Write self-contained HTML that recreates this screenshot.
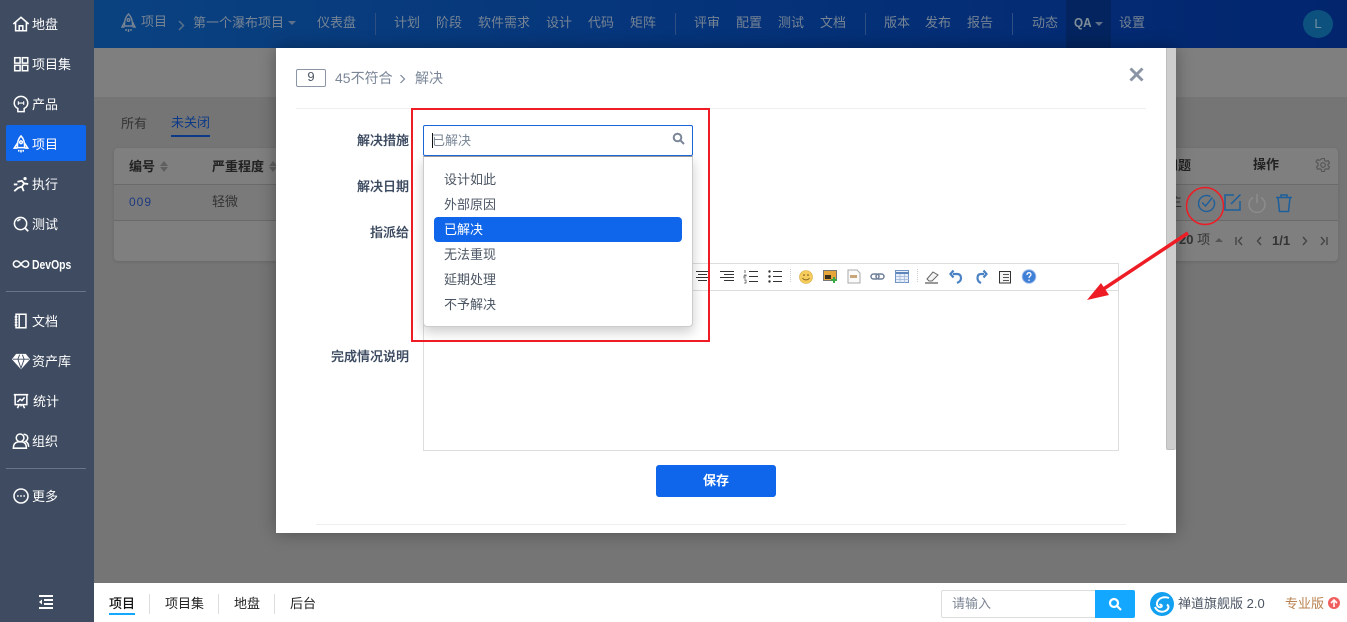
<!DOCTYPE html>
<html lang="zh"><head><meta charset="utf-8"><title>解决</title>
<style>
*{box-sizing:border-box}
html,body{margin:0;padding:0;width:1347px;height:622px;overflow:hidden;background:#757575;font-family:"Liberation Sans","Noto Sans CJK SC",sans-serif;font-size:13px}
.a{position:absolute}
.t{position:absolute;white-space:nowrap;line-height:20px;margin-top:1px}
.side{position:absolute;left:0;top:0;width:94px;height:622px;background:#3e4b60}
.side .t{left:32px;color:#fff;font-size:13px}
.side svg{position:absolute;left:12px;width:18px;height:18px;fill:none;stroke:#fff;stroke-width:1.700}
.nav{position:absolute;left:94px;top:0;width:1253px;height:48px;background:linear-gradient(90deg,#0a4280,#05337a 50%,#02256e)}
.top{position:absolute;white-space:nowrap;line-height:20px;top:13px;color:#768494;font-size:13px}
.sp{position:absolute;top:13px;width:1px;height:22px;background:#2f4f80}
.opt{position:absolute;left:20px;color:#4b5563;line-height:20px;white-space:nowrap;margin-top:1px}
.lab{position:absolute;right:938px;color:#3c4a60;line-height:20px;white-space:nowrap;font-weight:500;text-shadow:0 0 .4px #3c4a60;margin-top:1px}
.foot{position:absolute;top:594px;line-height:20px;color:#222;white-space:nowrap}
</style></head><body>

<div class="a" style="left:94px;top:48px;width:1253px;height:49px;background:#7f7f7f"></div>
<div class="t" style="left:121px;top:113px;color:#333">所有</div>
<div class="t" style="left:171px;top:112px;color:#0d3a88">未关闭</div>
<div class="a" style="left:171px;top:135px;width:39px;height:2px;background:#0d3a88"></div>
<div class="a" style="left:114px;top:148px;width:1224px;height:113px;background:#7f7f7f;border-radius:4px;box-shadow:0 1px 3px rgba(0,0,0,.12)"></div>
<div class="a" style="left:114px;top:184px;width:1224px;height:1px;background:#6a6a6a"></div>
<div class="a" style="left:114px;top:185px;width:1224px;height:35px;background:#7a7a7a"></div>
<div class="a" style="left:114px;top:220px;width:1224px;height:1px;background:#6a6a6a"></div>
<div class="t" style="left:129px;top:156px;color:#222;font-weight:700">编号</div>
<div class="a" style="left:160px;top:161px;border:4px solid transparent;border-bottom:5px solid #5f5f5f;border-top:0"></div>
<div class="a" style="left:160px;top:167px;border:4px solid transparent;border-top:5px solid #5f5f5f;border-bottom:0"></div>
<div class="t" style="left:212px;top:156px;color:#222;font-weight:700">严重程度</div>
<div class="a" style="left:269px;top:161px;border:4px solid transparent;border-bottom:5px solid #5f5f5f;border-top:0"></div>
<div class="a" style="left:269px;top:167px;border:4px solid transparent;border-top:5px solid #5f5f5f;border-bottom:0"></div>
<div class="t" style="left:129px;top:191px;color:#1d3a80;font-size:12px;letter-spacing:1px">009</div>
<div class="t" style="left:212px;top:191px;color:#333">轻微</div>
<div class="t" style="left:1176px;top:155px;width:15px;overflow:hidden;color:#222;direction:rtl;font-weight:700">问题</div>
<div class="t" style="left:1253px;top:154px;color:#222;font-weight:700">操作</div>
<svg class="a" style="left:1315px;top:157px" width="16" height="16" viewBox="0 0 16 16" fill="none" stroke="#555" stroke-width="1.100"><path d="M6.700 1.500h2.600l.4 2 1.500.8 2-.6 1.300 2.200-1.500 1.400v1.400l1.500 1.400-1.300 2.200-2-.6-1.500.8-.4 2H6.700l-.4-2-1.500-.8-2 .6-1.300-2.200 1.500-1.400V6.300L1 4.900l1.300-2.200 2 .6 1.500-.8z"/><circle cx="8" cy="8" r="2.300"/></svg>
<div class="t" style="left:1176px;top:191px;color:#333;width:6px;overflow:hidden;direction:rtl">主</div>
<svg class="a" style="left:1196px;top:193px" width="20" height="20" viewBox="0 0 20 20" fill="none" stroke="#1d5f9c" stroke-width="1.400"><path d="M17.500 6.500A8 8 0 1 1 14.500 3.500"/><path d="M6 9.500l3.500 3.500L16.500 4.500"/></svg>
<svg class="a" style="left:1223px;top:193px" width="19" height="19" viewBox="0 0 19 19" fill="none" stroke="#1d5f9c" stroke-width="1.500"><path d="M11 2H2v15h15V8"/><path d="M8 11L17.500 1.500"/></svg>
<svg class="a" style="left:1247px;top:193px" width="20" height="20" viewBox="0 0 20 20" fill="none" stroke="#8c8c8c" stroke-width="1.500"><path d="M6 4.500a8 8 0 1 0 8 0"/><path d="M10 1v9"/></svg>
<svg class="a" style="left:1274px;top:193px" width="20" height="20" viewBox="0 0 20 20" fill="none" stroke="#1d5f9c" stroke-width="1.500"><path d="M2 4.500h16M7 4.500V2h6v2.500M4 4.500l1.500 14h9l1.500-14"/></svg>
<div class="t" style="left:1179px;top:229px;color:#333;font-weight:700;font-size:13px">20 <span style="font-weight:400">项</span></div>
<div class="a" style="left:1215px;top:238px;border:4px solid transparent;border-bottom:4px solid #555;border-top:0"></div>
<svg class="a" style="left:1234px;top:234px" width="95" height="14" viewBox="0 0 95 14" fill="none" stroke="#444" stroke-width="1.400"><path d="M2 3v8M8 3L4.500 7 8 11M27 3l-3.500 4 3.500 4M69 3l3.500 4-3.500 4M87 3l3.500 4L87 11M93 3v8"/></svg>
<div class="t" style="left:1272px;top:230px;color:#333;font-weight:700;font-size:13px">1/1</div>

<div class="nav">
<svg class="a" style="left:27px;top:13px" width="15" height="20" viewBox="0 0 15 20" fill="none" stroke="#768494" stroke-width="1.400"><path d="M7.500 1C4.500 4 3.500 7 3.500 13h8c0-6-1-9-4-12z"/><circle cx="7.500" cy="7" r="1.300"/><path d="M3.500 9L1 14h2.500M11.500 9L14 14h-2.500M5 16v2M7.500 16v3M10 16v2"/></svg>
</div>
<div class="top" style="left:141px;top:12px">项目</div>
<svg class="a" style="left:178px;top:20px" width="7" height="11" viewBox="0 0 7 11" fill="none" stroke="#5a6f8a" stroke-width="1.500"><path d="M1 1l4.500 4.500L1 10"/></svg>
<div class="top" style="left:193px">第一个瀑布项目</div>
<div class="a" style="left:288px;top:21px;border:4px solid transparent;border-top:4px solid #5f7089;border-bottom:0"></div>
<div class="top" style="left:317px">仪表盘</div>
<div class="sp" style="left:375px"></div>
<div class="top" style="left:394px">计划</div>
<div class="top" style="left:436px">阶段</div>
<div class="top" style="left:478px">软件需求</div>
<div class="top" style="left:546px">设计</div>
<div class="top" style="left:588px">代码</div>
<div class="top" style="left:630px">矩阵</div>
<div class="sp" style="left:675px"></div>
<div class="top" style="left:694px">评审</div>
<div class="top" style="left:736px">配置</div>
<div class="top" style="left:778px">测试</div>
<div class="top" style="left:820px">文档</div>
<div class="sp" style="left:865px"></div>
<div class="top" style="left:884px">版本</div>
<div class="top" style="left:925px">发布</div>
<div class="top" style="left:967px">报告</div>
<div class="sp" style="left:1012px"></div>
<div class="top" style="left:1032px">动态</div>
<div class="a" style="left:1066px;top:0;width:45px;height:48px;background:#03245f"></div>
<div class="top" style="left:1074px;font-weight:700;color:#7f8e99;transform:scaleX(.9);transform-origin:0 50%">QA</div>
<div class="a" style="left:1095px;top:22px;border:4px solid transparent;border-top:4px solid #5f7089;border-bottom:0"></div>
<div class="top" style="left:1119px">设置</div>
<div class="a" style="left:1303px;top:10px;width:30px;height:28px;border-radius:50%;background:#0d527e;color:#6f8ea3;text-align:center;line-height:28px;font-size:13px">L</div>

<div class="side">
<svg style="top:15px" viewBox="0 0 20 20"><path d="M1.500 10L10 2.500 18.500 10M4 8v9.500h12V8M8 17.500V12h4v5.500"/></svg><div class="t" style="top:14px">地盘</div>
<svg style="top:55px" viewBox="0 0 20 20"><rect x="3" y="3" width="6" height="6"/><rect x="11.500" y="3" width="6" height="6"/><rect x="3" y="11.500" width="6" height="6"/><rect x="11.500" y="11.500" width="6" height="6"/></svg><div class="t" style="top:54px">项目集</div>
<svg style="top:95px" viewBox="0 0 20 20"><path d="M6.500 15C3.500 13.500 2.500 11 2.500 9a7.500 7.500 0 0 1 15 0c0 2-1 4.500-4 6v3.500h-7z"/><path d="M7 7v4M13 7v4M7 9h6" stroke-width="1.200"/></svg><div class="t" style="top:94px">产品</div>
<div class="a" style="left:6px;top:125px;width:80px;height:36px;background:#0f66ea;border-radius:2px"></div>
<svg style="top:135px" viewBox="0 0 20 20"><path d="M10 1C7 4 6 7.500 6 14h8c0-6.500-1-10-4-13z"/><circle cx="10" cy="8" r="1.500"/><path d="M6 9l-3.500 5.500H6M14 9l3.500 5.500H14M7.500 16.500v2M10 16.500v3M12.500 16.500v2"/></svg><div class="t" style="top:134px">项目</div>
<svg style="top:175px" viewBox="0 0 20 20"><circle cx="14.500" cy="4" r="1.800" fill="#fff" stroke="none"/><path d="M6 7.500l5-1 2.500 3-2.500 3.500 2 5M10.500 13l-4 1.500L2.500 18M14 9.500l4 .5M2 10.500h4" stroke-width="2"/></svg><div class="t" style="top:174px">执行</div>
<svg style="top:215px" viewBox="0 0 20 20"><circle cx="9.500" cy="9.500" r="6.800"/><path d="M14.500 14.500l3.500 3.500" stroke-width="2"/><path d="M6 7c1-1.500 2-2 3.500-2"/></svg><div class="t" style="top:214px">测试</div>
<svg style="top:255px" viewBox="0 0 20 20"><path d="M10 10c-2-2.500-3.500-3.500-5-3.500a3.500 3.500 0 0 0 0 7c1.500 0 3-1 5-3.500zm0 0c2-2.500 3.500-3.500 5-3.500a3.500 3.500 0 0 1 0 7c-1.500 0-3-1-5-3.500z"/></svg><div class="t" style="top:254px;font-weight:700;font-size:13px;transform:scaleX(.8);transform-origin:0 50%">DevOps</div>
<div class="a" style="left:6px;top:291px;width:80px;height:1px;background:#67748a"></div>
<svg style="top:312px" viewBox="0 0 20 20"><rect x="4.500" y="2.500" width="11" height="15"/><path d="M8 2.500v15M3 5.500h3M3 8.500h3M3 11.500h3M3 14.500h3"/></svg><div class="t" style="top:311px">文档</div>
<svg style="top:352px" viewBox="0 0 20 20"><path d="M5 3h10l4 5-9 10L1 8z" fill="#fff"/><path d="M1 8h18M6.500 8l3.500 10 3.500-10-2-5M6.500 8l2-5" stroke="#3e4b60" stroke-width="1"/></svg><div class="t" style="top:351px">资产库</div>
<svg style="top:392px" viewBox="0 0 20 20"><path d="M2 3h16M3.500 3v11h13V3M10 14v2M6 18l2-4M14 18l-2-4"/><path d="M6 11l3-3 2 1.500L14 6"/></svg><div class="t" style="top:391px;left:33px">统计</div>
<svg style="top:432px" viewBox="0 0 20 20"><circle cx="9" cy="6.500" r="4.300"/><path d="M1.500 18c0-5 2.500-6.500 5-7h5c2.500.5 4.500 2 4.500 7z"/><path d="M13 2.500c3 0 4.500 2 4.500 4s-1 3-2.500 4c2 .5 3.500 3 3.500 6"/></svg><div class="t" style="top:431px">组织</div>
<div class="a" style="left:6px;top:468px;width:80px;height:1px;background:#67748a"></div>
<svg style="top:487px" viewBox="0 0 20 20"><circle cx="10" cy="10" r="7.800"/><circle cx="6.500" cy="10" r="1" fill="#fff" stroke="none"/><circle cx="10" cy="10" r="1" fill="#fff" stroke="none"/><circle cx="13.500" cy="10" r="1" fill="#fff" stroke="none"/></svg><div class="t" style="top:486px">更多</div>
<svg style="left:38px;top:593px;width:16px;height:18px" viewBox="0 0 16 18"><path d="M1 3h14M6 7h9M6 11h9M1 15h14" stroke-width="2"/><path d="M4 6.500L1 9l3 2.500z" fill="#fff" stroke="none"/></svg>
</div>

<div class="a" style="left:94px;top:583px;width:1253px;height:39px;background:#fff"></div>
<div class="foot" style="left:109px;font-weight:500;color:#111">项目</div>
<div class="a" style="left:109px;top:613px;width:26px;height:2px;background:#14a7ff"></div>
<div class="a" style="left:149px;top:594px;width:1px;height:20px;background:#ddd"></div>
<div class="foot" style="left:165px">项目集</div>
<div class="a" style="left:218px;top:594px;width:1px;height:20px;background:#ddd"></div>
<div class="foot" style="left:234px">地盘</div>
<div class="a" style="left:274px;top:594px;width:1px;height:20px;background:#ddd"></div>
<div class="foot" style="left:290px">后台</div>
<div class="a" style="left:941px;top:590px;width:155px;height:28px;border:1px solid #ddd;border-radius:2px 0 0 2px"></div>
<div class="foot" style="left:952px;color:#7c8694">请输入</div>
<div class="a" style="left:1095px;top:590px;width:40px;height:28px;background:#14a7ff;border-radius:0 2px 2px 0"></div>
<svg class="a" style="left:1108px;top:597px" width="14" height="14" viewBox="0 0 14 14" fill="none" stroke="#fff" stroke-width="2.200"><circle cx="6" cy="6" r="4"/><path d="M9 9l4 4"/></svg>
<svg class="a" style="left:1150px;top:592px" width="24" height="24" viewBox="0 0 24 24"><circle cx="12" cy="12" r="12" fill="#14a0f0"/><path d="M19 6c-5-2-11 0-12 5-.5 3 2 5 4 4 2-1 0-3-1.500-2M5 15c2 5 8 6 12 3 2-2 2-4 0-5.500" fill="none" stroke="#fff" stroke-width="2"/></svg>
<div class="foot" style="left:1178px;color:#4b5563;font-size:13px">禅道旗舰版 2.0</div>
<div class="foot" style="left:1285px;color:#b9824f;font-size:13px">专业版</div>
<div class="a" style="left:1328px;top:597px;width:12px;height:12px;border-radius:50%;background:#f25f5f"></div>
<svg class="a" style="left:1330px;top:599px" width="8" height="8" viewBox="0 0 8 8" fill="none" stroke="#fff" stroke-width="1.600"><path d="M1 4l3-3 3 3M4 1v7"/></svg>

<!-- modal -->
<div class="a" style="left:276px;top:48px;width:900px;height:485px;background:#fff;box-shadow:0 0 16px rgba(0,0,0,.32)"></div>
<div class="a" style="left:1166px;top:48px;width:10px;height:402px;background:#cdcdcd;border-left:1px solid #bdbdbd;border-bottom:1px solid #bdbdbd;border-radius:0 0 2px 2px"></div>
<div class="a" style="left:296px;top:69px;width:30px;height:18px;border:1px solid #8b95a5;border-radius:2px;color:#4b5563;font-size:13px;text-align:center;line-height:14px">9</div>
<div class="t" style="left:335px;top:67px;color:#7b8798;font-size:14px">45不符合</div>
<svg class="a" style="left:399px;top:74px" width="7" height="10" viewBox="0 0 7 10" fill="none" stroke="#7b8798" stroke-width="1.200"><path d="M1.500 1l4 4-4 4"/></svg>
<div class="t" style="left:415px;top:67px;color:#7b8798;font-size:14px">解决</div>
<svg class="a" style="left:1129px;top:67px" width="15" height="15" viewBox="0 0 15 15" stroke="#8b95a5" stroke-width="3"><path d="M1.500 1.500l12 12M13.500 1.500l-12 12"/></svg>
<div class="a" style="left:296px;top:108px;width:850px;height:1px;background:#eee"></div>

<div class="lab" style="top:130px">解决措施</div>
<div class="lab" style="top:176px">解决日期</div>
<div class="lab" style="top:222px">指派给</div>
<div class="lab" style="top:346px">完成情况说明</div>

<div class="a" style="left:423px;top:263px;width:696px;height:188px;border:1px solid #ddd"></div>
<div class="a" style="left:424px;top:290px;width:694px;height:1px;background:#ddd"></div>
<svg class="a" style="left:695px;top:268px" width="345" height="17" viewBox="0 0 345 17" fill="none">
<path d="M1 3.500h13M3 6.500h9M1 9.500h13M3 12.500h9M25 3.500h14M29 6.500h10M25 9.500h14M29 12.500h10" stroke="#333"/>
<path d="M54 3.500h9M54 8.500h9M54 13.500h9" stroke="#333"/><path d="M50 2v3M49 7h2v1h-2v2h2M49 12h2v3h-2" stroke="#555" stroke-width=".8"/>
<path d="M78 3.500h9M78 8.500h9M78 13.500h9" stroke="#333"/><circle cx="74.500" cy="3.500" r="1.200" fill="#333"/><circle cx="74.500" cy="8.500" r="1.200" fill="#333"/><circle cx="74.500" cy="13.500" r="1.200" fill="#333"/>
<path d="M95.500 1v14M222.500 1v14" stroke="#ccc" stroke-dasharray="1 1"/>
<circle cx="111" cy="9" r="6.500" fill="#f6cd5c" stroke="#d7a93d" stroke-width=".6"/><path d="M107.500 10c1.500 2.500 5.500 2.500 7 0" stroke="#8a6a1f"/><circle cx="109" cy="7" r=".8" fill="#6a4a10"/><circle cx="113" cy="7" r=".8" fill="#6a4a10"/>
<rect x="128.500" y="2.500" width="13" height="10" fill="#e7a63a" stroke="#777"/><rect x="130" y="7" width="6" height="4" fill="#3a2f1a"/><path d="M139 9v6M136 12h6" stroke="#39a845" stroke-width="2"/>
<path d="M153 2h9l3 3v10h-12z" fill="#fafafa" stroke="#aaa"/><path d="M155 7h7v3h-7z" fill="#c9a67a"/>
<rect x="176" y="6" width="8" height="5" rx="2.500" stroke="#6f7f99" stroke-width="1.500"/><rect x="181" y="6" width="8" height="5" rx="2.500" stroke="#6f7f99" stroke-width="1.500"/>
<rect x="200.500" y="2.500" width="13" height="12" fill="#e8effa" stroke="#6f94c4"/><path d="M201 5h13" stroke="#5f86bb" stroke-width="2"/><path d="M201 8.500h13M201 11.500h13M205 6v9M209.500 6v9" stroke="#9ab5d8" stroke-width=".7"/>
<path d="M232 11l6-7 5 3-6 6h-3z" fill="#f3f3f3" stroke="#666"/><path d="M230 15h13" stroke="#333"/>
<path d="M258 6h4c3 0 4 2 4 4 0 3-2 4-4 5M258.500 2.500L255.500 6l3 3.500" stroke="#4a82c4" stroke-width="2.200"/>
<path d="M289 6h-3c-3 0-3.500 2-3.500 4 0 3 1.500 4 3.500 5M288.500 2.500L291.500 6l-3 3.500" stroke="#4a82c4" stroke-width="2.200"/>
<rect x="304.500" y="3.500" width="11" height="11.500" fill="#f4f4f4" stroke="#333"/><path d="M308 6.500h6M308 9.500h6M308 12.500h6" stroke="#555"/>
<circle cx="334" cy="8.500" r="6.800" fill="#3f7fd6" stroke="#9dbcec"/><path d="M332 7c0-3 4-3 4-.5 0 1.500-2 1.500-2 3.500M334 11.500v1.500" stroke="#fff" stroke-width="1.300"/>
</svg>

<div class="a" style="left:656px;top:465px;width:120px;height:32px;background:#0f66ea;border-radius:3px;color:#fff;text-align:center;line-height:31px;font-weight:700">保存</div>
<div class="a" style="left:316px;top:524px;width:810px;height:1px;background:#eee"></div>

<div class="a" style="left:423px;top:156px;width:270px;height:171px;background:#fff;border:1px solid #ccc;border-top:1px solid #999;border-radius:0 0 4px 4px;box-shadow:0 5px 12px rgba(0,0,0,.2)">
<div class="opt" style="top:12px">设计如此</div>
<div class="opt" style="top:37px">外部原因</div>
<div class="a" style="left:10px;top:60px;width:248px;height:25px;background:#0f66ea;border-radius:4px"></div>
<div class="opt" style="top:62px;color:#fff">已解决</div>
<div class="opt" style="top:87px">无法重现</div>
<div class="opt" style="top:112px">延期处理</div>
<div class="opt" style="top:137px">不予解决</div>
</div>
<div class="a" style="left:423px;top:125px;width:270px;height:31px;background:#fff;border:1px solid #1a66d6;border-radius:2px"></div>
<div class="a" style="left:432px;top:133px;width:1px;height:15px;background:#111"></div>
<div class="t" style="left:432px;top:130px;color:#7b8798">已解决</div>
<svg class="a" style="left:672px;top:132px" width="13" height="13" viewBox="0 0 13 13" fill="none" stroke="#7b8798" stroke-width="2"><circle cx="5.500" cy="5.500" r="3.800"/><path d="M8.500 8.500l3.500 3.500"/></svg>

<div class="a" style="left:411px;top:108px;width:299px;height:234px;border:2px solid #ee1c25"></div>
<svg class="a" style="left:1080px;top:180px" width="150" height="130" viewBox="0 0 150 130" fill="none">
<circle cx="125" cy="26" r="18.500" stroke="#ee1c25" stroke-width="1.500"/>
<path d="M108 53L22 110" stroke="#ee1c25" stroke-width="3.500"/>
<path d="M7 120L21 103l8 12z" fill="#ee1c25"/>
</svg>
</body></html>
